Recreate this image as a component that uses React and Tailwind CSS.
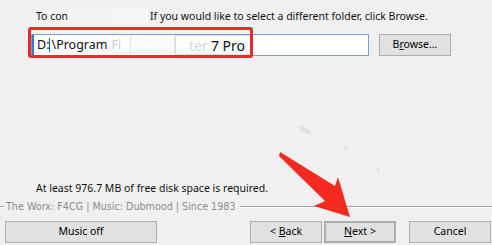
import React from "react";

const font = { fontFamily: '"Noto Sans", "Open Sans", sans-serif' };

function Btn({ children, className = "" }) {
  return (
    <div
      className={`flex items-center justify-center h-[22px] bg-[#e1e1e1] border border-[#adadad] text-[10.5px] text-black ${className}`}
    >
      {children}
    </div>
  );
}

export default function App() {
  return (
    <div
      className="relative w-[492px] h-[245px] overflow-hidden bg-[#f0f0f0] flex flex-col text-[10.5px] text-[#111]"
      style={font}
    >
      {/* top instruction */}
      <div className="mt-[8px] h-[16px] flex items-center pl-[36px] leading-[16px] whitespace-nowrap">
        <div className="w-[114px] flex items-center overflow-hidden">
          <span>To con</span>
          <span className="flex-1 h-[14px] bg-gradient-to-r from-[#f4f4f4] to-[#f7f7f7] blur-[1px]" />
        </div>
        <span>If you would like to select a different folder, click Browse.</span>
      </div>

      {/* path row */}
      <div className="mt-[10px] h-[22px] flex items-center pl-[31px]">
        <div className="w-[338px] h-[22px] bg-white border border-[#7a9fd4] flex items-center">
          <div className="w-[98px] h-full flex items-center overflow-hidden text-[12.5px]">
            <div className="w-[2px] h-full bg-[#2c7be5]" />
            <span className="ml-[3px] whitespace-nowrap">D:</span>
            <span className="w-px h-[14px] bg-[#1a5fc4]" />
            <span className="ml-px whitespace-nowrap">\Program</span>
            <span className="ml-[4px] text-[#c8c8c8] blur-[0.5px] whitespace-nowrap">Fi</span>
          </div>
          <div className="w-[45px] h-[18px] border-x border-[#e2e2e2] bg-[#fbfbfb]" />
          <div className="w-[77px] h-[20px] border border-[#d8dbe2] flex items-center justify-end pr-[6px] bg-[#fdfdfd] whitespace-nowrap text-[14px]">
            <span className="text-[#d6d6d6] blur-[0.5px] mr-[3px]">ter</span>
            <span>7 Pro</span>
          </div>
        </div>
        <Btn className="ml-[10px] w-[72px]">
          <span>
            B<span className="underline">r</span>owse...
          </span>
        </Btn>
      </div>

      {/* disk space */}
      <div className="mt-[124px] h-[16px] pl-[36px] leading-[16px] whitespace-nowrap">
        At least 976.7 MB of free disk space is required.
      </div>

      {/* footer separator */}
      <div className="mt-[3px] h-[16px] flex items-center">
        <div className="w-[4px] h-[2px] border-t border-[#a0a0a0] border-b border-b-white" />
        <span
          className="ml-[2px] mr-[4px] text-[#8d8d8d] whitespace-nowrap leading-[16px] text-[9.6px]"
          style={{ fontFamily: '"DejaVu Sans", sans-serif' }}
        >
          The Worx: F4CG | Music: Dubmood | Since 1983
        </span>
        <div className="flex-1 h-[2px] border-t border-[#a0a0a0] border-b border-b-white" />
      </div>

      {/* buttons */}
      <div className="mt-[6px] flex items-center">
        <Btn className="ml-[5px] w-[152px]">Music off</Btn>
        <Btn className="ml-[93px] w-[72px]">
          <span>
            &lt; <span className="underline">B</span>ack
          </span>
        </Btn>
        <Btn className="ml-[2px] w-[72px] border-2 border-[#0078d7]">
          <span>
            <span className="underline">N</span>ext &gt;
          </span>
        </Btn>
        <Btn className="ml-[13px] w-[82px]">Cancel</Btn>
      </div>

      {/* red highlight rectangle */}
      <div className="absolute left-[28px] top-[27px] w-[225px] h-[31px] border-[3px] border-[#e82a2a] rounded-[3px] pointer-events-none" />

      {/* arrow & faint marks */}
      <svg
        className="absolute left-0 top-0 pointer-events-none"
        width="492"
        height="245"
        viewBox="0 0 492 245"
      >
        <g fill="#d4d4d4" opacity="0.5">
          <ellipse cx="305" cy="130" rx="7" ry="2.5" transform="rotate(30 305 130)" />
          <ellipse cx="346" cy="148" rx="3" ry="1.5" transform="rotate(45 346 148)" />
          <ellipse cx="378" cy="170" rx="1.2" ry="3" />
        </g>
        <polygon
          points="280,152 335,186 338,177 350,217 314,206 325,201 279,156"
          fill="#f42a20"
        />
      </svg>
    </div>
  );
}
